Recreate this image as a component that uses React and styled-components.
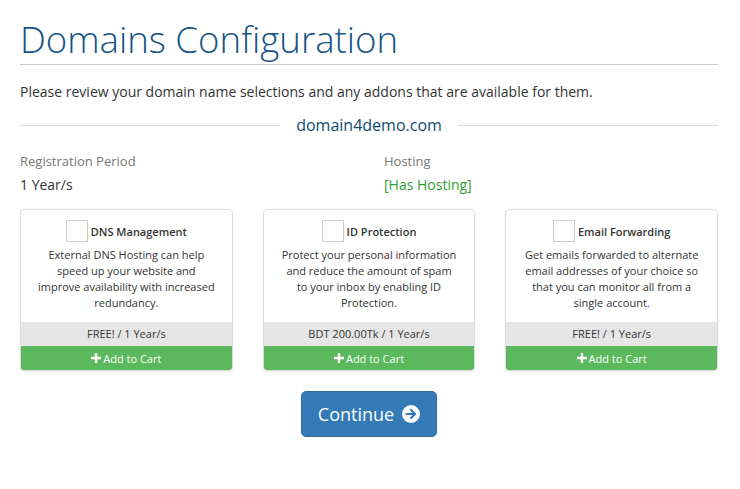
import React from "react";
import styled, { createGlobalStyle } from "styled-components";

const Global = createGlobalStyle`
  html, body { margin: 0; padding: 0; background: #fff; }
  body { font-family: "Open Sans", "Liberation Sans", sans-serif; color: #333; }
  * { box-sizing: border-box; }
`;

const Page = styled.div`
  width: 740px;
  padding: 14px 22px 0 20px;
`;

const Title = styled.h1`
  margin: 0;
  font-size: 36.6px;
  font-weight: 300;
  line-height: 50px;
  color: #155487;
  border-bottom: 1px solid #ccc;
  height: 51px;
`;

const Intro = styled.p`
  margin: 17px 0 0;
  font-size: 14px;
  line-height: 20px;
  color: #333;
`;

const DomainDivider = styled.div`
  display: flex;
  align-items: center;
  gap: 16px;
  margin-top: 12px;
  height: 22px;
  &::before, &::after {
    content: "";
    flex: 1;
    height: 1px;
    background: #ddd;
  }
`;

const DomainName = styled.span`
  font-size: 16px;
  color: #0f4b70;
`;

const InfoRow = styled.div`
  display: grid;
  grid-template-columns: 1fr 1fr;
  column-gap: 30px;
  margin-top: 16px;
`;

const InfoLabel = styled.div`
  font-size: 13px;
  line-height: 18px;
  color: #777;
`;

const InfoValue = styled.div`
  margin-top: 5px;
  font-size: 14px;
  line-height: 20px;
  color: ${(p) => (p.$ok ? "#2f9e2f" : "#333")};
`;

const Cards = styled.div`
  display: grid;
  grid-template-columns: repeat(3, 1fr);
  column-gap: 30px;
  margin-top: 14px;
`;

const Card = styled.div`
  border: 1px solid #ddd;
  border-radius: 4px;
  overflow: hidden;
  box-shadow: 0 1px 2px rgba(0, 0, 0, 0.08);
  display: flex;
  flex-direction: column;
`;

const CardBody = styled.div`
  padding: 10px 6px 11px;
  text-align: center;
  flex: 1;
`;

const CardHead = styled.label`
  display: flex;
  align-items: center;
  justify-content: center;
  gap: 3px;
  height: 22px;
`;

const Check = styled.span`
  display: inline-block;
  width: 22px;
  height: 22px;
  border: 1px solid #d0ccc6;
  background: #fff;
`;

const CardTitle = styled.span`
  font-size: 11px;
  font-weight: 600;
  color: #333;
`;

const CardText = styled.p`
  margin: 5px 0 0;
  font-size: 11px;
  line-height: 16px;
  color: #333;
`;

const TextLine = styled.span`
  display: block;
  white-space: nowrap;
`;

const Price = styled.div`
  background: #e6e6e6;
  height: 24px;
  line-height: 24px;
  text-align: center;
  font-size: 11px;
  color: #333;
`;

const AddButton = styled.button`
  border: 0;
  background: #5cb85c;
  color: #fff;
  height: 24px;
  font-family: inherit;
  font-size: 11px;
  display: flex;
  align-items: center;
  justify-content: center;
  gap: 2px;
  cursor: pointer;
  padding: 0;
`;

const Footer = styled.div`
  display: flex;
  justify-content: center;
  margin-top: 20px;
`;

const ContinueButton = styled.button`
  background: #337ab7;
  border: 1px solid #2e6da4;
  border-radius: 5px;
  color: #fff;
  font-family: inherit;
  font-size: 18px;
  height: 46px;
  padding: 0 16px;
  display: flex;
  align-items: center;
  gap: 8px;
  cursor: pointer;
`;

const Plus = () => (
  <svg width="10" height="10" viewBox="0 0 10 10">
    <path d="M3.8 0h2.4v3.8H10v2.4H6.2V10H3.8V6.2H0V3.8h3.8z" fill="#fff" />
  </svg>
);

const ArrowCircle = () => (
  <svg width="18" height="18" viewBox="0 0 20 20">
    <circle cx="10" cy="10" r="10" fill="#fff" />
    <path d="M5 10h9M10 5.5l4.5 4.5L10 14.5" stroke="#337ab7" strokeWidth="2.4" fill="none" strokeLinecap="round" strokeLinejoin="round" />
  </svg>
);

const addons = [
  {
    title: "DNS Management",
    lines: [
      "External DNS Hosting can help",
      "speed up your website and",
      "improve availability with increased",
      "redundancy.",
    ],
    price: "FREE! / 1 Year/s",
  },
  {
    title: "ID Protection",
    lines: [
      "Protect your personal information",
      "and reduce the amount of spam",
      "to your inbox by enabling ID",
      "Protection.",
    ],
    price: "BDT 200.00Tk / 1 Year/s",
  },
  {
    title: "Email Forwarding",
    lines: [
      "Get emails forwarded to alternate",
      "email addresses of your choice so",
      "that you can monitor all from a",
      "single account.",
    ],
    price: "FREE! / 1 Year/s",
  },
];

export default function App() {
  return (
    <>
      <Global />
      <Page>
        <Title>Domains Configuration</Title>
        <Intro>Please review your domain name selections and any addons that are available for them.</Intro>
        <DomainDivider>
          <DomainName>domain4demo.com</DomainName>
        </DomainDivider>
        <InfoRow>
          <div>
            <InfoLabel>Registration Period</InfoLabel>
            <InfoValue>1 Year/s</InfoValue>
          </div>
          <div>
            <InfoLabel>Hosting</InfoLabel>
            <InfoValue $ok>[Has Hosting]</InfoValue>
          </div>
        </InfoRow>
        <Cards>
          {addons.map((a) => (
            <Card key={a.title}>
              <CardBody>
                <CardHead>
                  <Check />
                  <CardTitle>{a.title}</CardTitle>
                </CardHead>
                <CardText>
                  {a.lines.map((l) => (
                    <TextLine key={l}>{l}</TextLine>
                  ))}
                </CardText>
              </CardBody>
              <Price>{a.price}</Price>
              <AddButton>
                <Plus /> Add to Cart
              </AddButton>
            </Card>
          ))}
        </Cards>
        <Footer>
          <ContinueButton>
            Continue <ArrowCircle />
          </ContinueButton>
        </Footer>
      </Page>
    </>
  );
}
